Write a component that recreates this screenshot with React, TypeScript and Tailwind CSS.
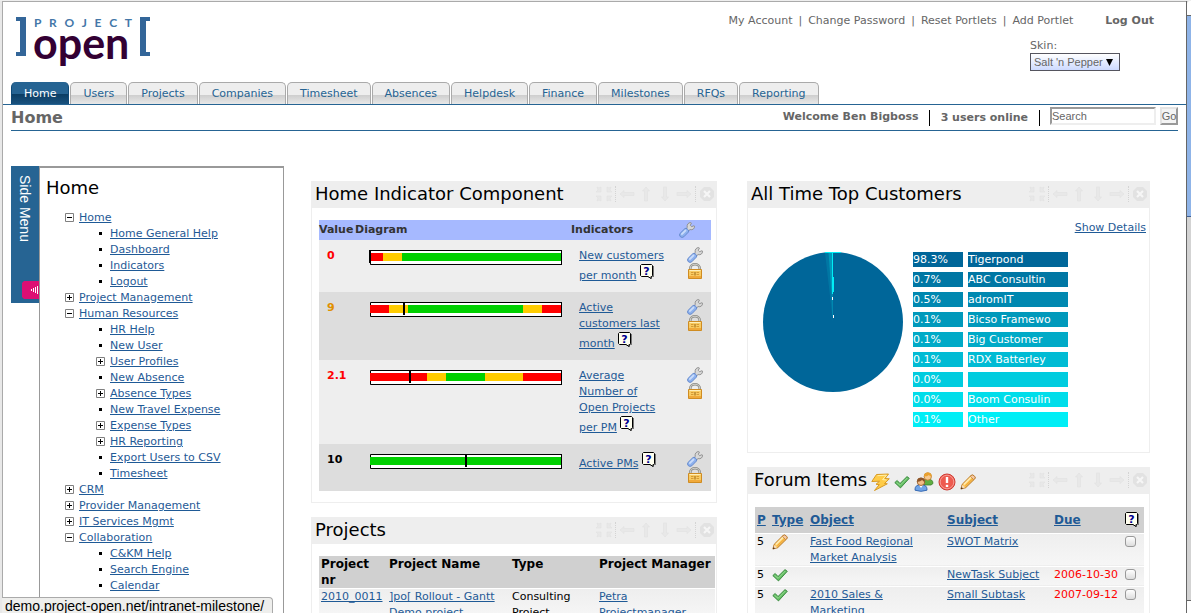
import React from 'react';

interface MenuItem {
  label: string;
  open?: boolean;
  closed?: boolean;
  children?: MenuItem[];
}

interface Indicator {
  value: string;
  valueClass: string;
  name: string;
  marker: number;
  bands: [string, number][];
}

const R = '#ff0000';
const Y = '#ffcc00';
const G = '#00d000';

const tabs = [
  'Users',
  'Projects',
  'Companies',
  'Timesheet',
  'Absences',
  'Helpdesk',
  'Finance',
  'Milestones',
  'RFQs',
  'Reporting',
];

const menu: MenuItem[] = [
  {
    label: 'Home',
    open: true,
    children: [{ label: 'Home General Help' }, { label: 'Dashboard' }, { label: 'Indicators' }, { label: 'Logout' }],
  },
  { label: 'Project Management', closed: true },
  {
    label: 'Human Resources',
    open: true,
    children: [
      { label: 'HR Help' },
      { label: 'New User' },
      { label: 'User Profiles', closed: true },
      { label: 'New Absence' },
      { label: 'Absence Types', closed: true },
      { label: 'New Travel Expense' },
      { label: 'Expense Types', closed: true },
      { label: 'HR Reporting', closed: true },
      { label: 'Export Users to CSV' },
      { label: 'Timesheet' },
    ],
  },
  { label: 'CRM', closed: true },
  { label: 'Provider Management', closed: true },
  { label: 'IT Services Mgmt', closed: true },
  {
    label: 'Collaboration',
    open: true,
    children: [{ label: 'C&KM Help' }, { label: 'Search Engine' }, { label: 'Calendar' }],
  },
];

const indicators: Indicator[] = [
  { value: '0', valueClass: 'text-[#ff0000]', name: 'New customers per month', marker: 0, bands: [[R, 13], [Y, 19], [G, 160]] },
  { value: '9', valueClass: 'text-[#e09000]', name: 'Active customers last month', marker: 34, bands: [[R, 19], [Y, 19], [G, 115], [Y, 19], [R, 20]] },
  { value: '2.1', valueClass: 'text-[#ff0000]', name: 'Average Number of Open Projects per PM', marker: 40, bands: [[R, 57], [Y, 19], [G, 39], [Y, 38], [R, 39]] },
  { value: '10', valueClass: 'text-black', name: 'Active PMs', marker: 96, bands: [[G, 192]] },
];

const customers = [
  { share: '98.3%', name: 'Tigerpond', color: 'bg-[#006699]' },
  { share: '0.7%', name: 'ABC Consultin', color: 'bg-[#0077a4]' },
  { share: '0.5%', name: 'adromIT', color: 'bg-[#0088b0]' },
  { share: '0.1%', name: 'Bicso Framewo', color: 'bg-[#0099bb]' },
  { share: '0.1%', name: 'Big Customer', color: 'bg-[#00aac7]' },
  { share: '0.1%', name: 'RDX Batterley', color: 'bg-[#00bbd4]' },
  { share: '0.0%', name: '', color: 'bg-[#00ccdf]' },
  { share: '0.0%', name: 'Boom Consulin', color: 'bg-[#00ddea]' },
  { share: '0.1%', name: 'Other', color: 'bg-[#00eef6]' },
];

const forumItems = [
  { type: 'pencil', object: 'Fast Food Regional\nMarket Analysis', subject: 'SWOT Matrix', due: '' },
  { type: 'check', object: '', subject: 'NewTask Subject', due: '2006-10-30' },
  { type: 'check', object: '2010 Sales &\nMarketing', subject: 'Small Subtask', due: '2007-09-12' },
];

const Link: React.FC<{ children: React.ReactNode }> = ({ children }) => (
  <a href="#" className="text-[#1f5a96] underline">
    {children}
  </a>
);

/* Icons */

const HelpIcon = () => (
  <svg width="14" height="15" viewBox="0 0 14 15" className="inline-block shrink-0 align-baseline" role="img" aria-label="Help">
    <path d="M2 2h12v11h-2v2l-4-2H2z" fill="#777" />
    <path d="M1.500.500h10l1 1v10l-1 1h-.500v2l-3-2h-6.500l-1-1v-10z" fill="#fffff0" stroke="#000" />
    <text x="6.500" y="10.500" textAnchor="middle" fontFamily="DejaVu Sans" fontWeight="bold" fontSize="11" fill="#000090">
      ?
    </text>
  </svg>
);

const WrenchIcon = () => (
  <svg width="16" height="16" viewBox="0 0 16 16" aria-hidden="true">
    <path
      d="M7.200 7 8.200 5.300C7.700 2.500 9.300.700 11.600.500L12.400 1 11.300 3.300 12.600 4.700 15 3.700 15.600 4.200C15.600 6.800 13.600 8.200 11.100 7.600L9.300 9z"
      fill="#d8d8d8"
      stroke="#8a8a8a"
      strokeWidth=".9"
    />
    <path d="M1.100 11.300 5.800 6.700Q7 5.700 8.200 6.800L9.300 7.900Q10.200 9 9.300 10.200L4.800 14.800Q3 16.100 1.300 14.700-.200 13 1.100 11.300z" fill="#8db1ee" stroke="#6186ca" strokeWidth=".9" />
    <path d="M2.300 12.700 7 8" stroke="#c9dcfb" strokeWidth="1.800" />
  </svg>
);

const LockIcon = () => (
  <svg width="16" height="16" viewBox="0 0 16 16" aria-hidden="true">
    <path d="M3.300 7.500V5.200a4.700 3.900 0 0 1 9.400 0v2.300" fill="none" stroke="#8b8b86" strokeWidth="2.600" />
    <path d="M3.300 7.500V5.200a4.700 3.900 0 0 1 9.400 0v2.300" fill="none" stroke="#cfcfca" strokeWidth="1.100" />
    <path d="M1.500 6.500h13v9h-13z" fill="#f8cb62" stroke="#cf8c22" />
    <path d="M2 13h12v2H2z" fill="#f0a93a" />
    <path d="M2.500 7.500h11" stroke="#fdeebb" />
    <path d="M4 9.500h2.500M4 11.500h2.500M9.500 9.500H12M9.500 11.500H12" stroke="#d79a33" />
    <path d="M7.500 9h1v3.500h-1z" fill="#9a640f" />
  </svg>
);

const CheckIcon = () => (
  <svg width="16" height="16" viewBox="0 0 16 16" aria-hidden="true">
    <path d="M.800 8.600 3.200 6.500 6 9.500 13 2.600 15.300 4.300 6.500 13.900z" fill="#63bd62" stroke="#34843a" strokeWidth=".9" strokeLinejoin="round" />
    <path d="M2.500 8.300 6.100 11.300 13.300 4" fill="none" stroke="#9bdc96" strokeWidth=".9" />
  </svg>
);

const PencilIcon = () => (
  <svg width="16" height="16" viewBox="0 0 16 16" aria-hidden="true">
    <path d="M.900 15 2.200 10.300 11 1.500Q12.400.400 14 1.700L14.500 2.300Q15.800 3.700 14.600 5L5.700 13.700z" fill="#ffc95d" stroke="#b06b17" strokeWidth=".9" />
    <path d="M3.800 10.500 11.600 2.800" stroke="#ffeeb8" strokeWidth="1.400" />
    <path d="M5.300 12 13 4.500" stroke="#e99c2d" />
    <path d="M1.300 14.700 2.300 11 5 13.500z" fill="#f4ddc0" />
    <path d="M.900 15.200 1.500 13l1.500 1.500z" fill="#4a2b12" />
    <path d="M11 1.600Q12.400.400 14 1.700L14.500 2.300Q15.800 3.700 14.600 5L13.600 5.600 10.400 2.500z" fill="#f3c7a4" stroke="#b06b17" strokeWidth=".6" />
  </svg>
);

const BoltIcon = () => (
  <svg width="19" height="20" viewBox="0 0 19 20" aria-hidden="true">
    <path d="M5.500 2.500 17.500 2 14 6.500 18.300 6.800 13.500 11.500 16.300 11.800 3.500 18.500 8.300 12.600 5 12.300 8.500 9.200.800 9.500z" fill="#ffcc48" stroke="#d89a23" strokeLinejoin="round" />
    <path d="M6.500 3.700 15.500 3.200 11.500 7.600 15.500 8" fill="none" stroke="#fff0a8" />
  </svg>
);

const UsersIcon = () => (
  <svg width="20" height="20" viewBox="0 0 20 20" aria-hidden="true">
    <path d="M9 11.500Q8.500 7 13.700 7T19 11.500L17 13H10z" fill="#5fae42" stroke="#397b27" strokeWidth=".8" />
    <circle cx="13.800" cy="4.500" r="3.700" fill="#f7c98f" stroke="#b87524" strokeWidth=".8" />
    <path d="M10 4.500Q9.900.600 13.800.600T17.600 4.800Q15.800 4.200 15 2.900 13 4.400 10 4.500z" fill="#eaa12e" />
    <path d="M1 18.200Q.500 12.700 7 12.700T13 18.200Q7 20.500 1 18.200z" fill="#6fa4e8" stroke="#2f62ae" strokeWidth=".9" />
    <path d="M5 13 7 16 9 13z" fill="#fff" />
    <circle cx="7" cy="9.700" r="3.800" fill="#f3bd86" stroke="#8c5220" strokeWidth=".8" />
    <path d="M3.100 9.900Q3 5.700 7 5.700T10.900 10Q9 9.300 8.200 8 6.500 9.600 3.100 9.900z" fill="#8d5428" />
  </svg>
);

const AlertIcon = () => (
  <svg width="18" height="18" viewBox="0 0 18 18" aria-hidden="true">
    <circle cx="9" cy="9" r="8" fill="#ee5b50" stroke="#cf3c34" />
    <circle cx="9" cy="9" r="6.800" fill="none" stroke="#f7a49c" strokeWidth=".9" />
    <path d="M9 4v6" stroke="#fff" strokeWidth="2.400" />
    <path d="M9 11.800v2.200" stroke="#fff" strokeWidth="2.400" />
  </svg>
);

const ToolIcon: React.FC<{ label: string; d: string }> = ({ label, d }) => (
  <button type="button" aria-label={label} className="block size-4">
    <svg width="16" height="16" viewBox="0 0 16 16" aria-hidden="true">
      <path d={d} fill="#e8e8e8" stroke="#e1e1e1" strokeWidth=".6" />
    </svg>
  </button>
);

const PortletTools = () => (
  <div className="flex shrink-0 items-center gap-[3px]">
    <ToolIcon
      label="Minimize"
      d="M1 1l2 1 2-1v5l-5 0 2-2zM15 1l-2 1-2-1v5h5l-2-2zM1 15l2-1 2 1v-5H0l2 2zM15 15l-2-1-2 1v-5h5l-2 2z"
    />
    <span className="h-4 border-l border-dotted border-[#d4d4d4]" />
    <ToolIcon label="Move left" d="M1 8l4-3.500v2h10v3H5v2z" />
    <ToolIcon label="Move up" d="M8 1l3.500 4h-2v10h-3V5h-2z" />
    <ToolIcon label="Move down" d="M8 15l3.500-4h-2V1h-3v10h-2z" />
    <ToolIcon label="Move right" d="M15 8l-4-3.500v2H1v3h10v2z" />
    <span className="h-4 border-l border-dotted border-[#d4d4d4]" />
    <button type="button" aria-label="Close" className="block size-4">
      <svg width="16" height="16" viewBox="0 0 16 16" aria-hidden="true">
        <path d="M5 1h6l4 4v6l-4 4H5l-4-4V5z" fill="#e2e2e2" />
        <path d="M5 5l6 6M11 5l-6 6" stroke="#f6f6f6" strokeWidth="2.200" />
      </svg>
    </button>
  </div>
);

const Portlet: React.FC<{ title: string; icons?: React.ReactNode; children: React.ReactNode }> = ({ title, icons, children }) => (
  <section className="border border-[#eeeeee] bg-white">
    <div className="flex h-[26px] items-center justify-between bg-[#eeeeee] pr-px pb-[3px] pl-[3px]">
      <div className={icons ? 'flex items-center gap-1 pl-[3px]' : 'flex items-center'}>
        <h2 className="text-[18px] leading-[24px] whitespace-nowrap">{title}</h2>
        {icons}
      </div>
      <PortletTools />
    </div>
    {children}
  </section>
);

/* Page parts */

const Logo = () => (
  <a href="#" aria-label="Project Open" className="flex h-[54px] w-[134px] items-start justify-between">
    <svg width="10" height="39" viewBox="0 0 10 39" aria-hidden="true">
      <path d="M0 0h10v39H0v-4h4V4H0z" fill="#336699" />
    </svg>
    <span className="flex w-[98px] flex-col">
      <span className="flex justify-between font-['Lato'] text-[12px] leading-[11px] font-bold text-[#4477a8]">
        {['P', 'R', 'O', 'J', 'E', 'C', 'T'].map((letter) => (
          <span key={letter}>{letter}</span>
        ))}
      </span>
      <span className="-ml-px font-['Lato'] text-[43px] leading-[30px] font-bold text-[#330033]">open</span>
    </span>
    <svg width="10" height="39" viewBox="0 0 10 39" aria-hidden="true">
      <path d="M10 0H0v39h10v-4H6V4h4z" fill="#336699" />
    </svg>
  </a>
);

const TopBar = () => (
  <header className="flex h-20 justify-between pt-3 pr-8 pl-[13px]">
    <div className="pt-[3px]">
      <Logo />
    </div>
    <div className="flex flex-col items-end text-[#666666]">
      <nav className="flex items-center leading-[14px]">
        <a href="#">My Account</a>
        <span className="px-[6px]">|</span>
        <a href="#">Change Password</a>
        <span className="px-[6px]">|</span>
        <a href="#">Reset Portlets</a>
        <span className="px-[6px]">|</span>
        <a href="#">Add Portlet</a>
        <a href="#" className="ml-8 font-bold">
          Log Out
        </a>
      </nav>
      <div className="mt-[11px] mr-[34px] flex w-[90px] flex-col">
        <label htmlFor="skin" className="leading-[14px]">
          Skin:
        </label>
        <div className="flex items-center border border-[#55555f] bg-linear-to-b from-white to-[#cddaff]">
          <select id="skin" className="h-4 w-full appearance-none pl-[3px] font-['Liberation_Sans',sans-serif] text-[11px]">
            <option>Salt 'n Pepper</option>
          </select>
          <svg width="7" height="7" viewBox="0 0 7 7" className="mr-[6px] shrink-0" aria-hidden="true">
            <path d="M0 0h7L3.500 7z" fill="#000" />
          </svg>
        </div>
      </div>
    </div>
  </header>
);

const MainTabs = () => (
  <nav className="flex gap-px border-b border-[#266493] pl-2">
    <a
      href="#"
      className="h-[22px] rounded-t-[5px] border-x border-[#0f4a78] bg-[linear-gradient(#266493_55%,#0b3d63_55%,#1a527f)] px-3 leading-[23px] text-white"
    >
      Home
    </a>
    {tabs.map((tab) => (
      <a
        key={tab}
        href="#"
        className="h-[22px] rounded-t-[5px] border border-b-0 border-[#aaaaaa] bg-[linear-gradient(#eeeeee_55%,#cccccc_55%,#e8e8e8)] px-3 leading-[22px] text-[#266493]"
      >
        {tab}
      </a>
    ))}
  </nav>
);

const SubBar = () => (
  <div className="mr-2 ml-2 flex h-[26px] items-center border-b border-[#266493] font-bold text-[#666666]">
    <h1 className="flex-1 text-[16px]">Home</h1>
    <span className="pr-[10px]">Welcome Ben Bigboss</span>
    <span className="border-x border-black px-[11px] leading-4">3 users online</span>
    <form className="flex items-center gap-1 pb-1 pl-[10px] font-['Liberation_Sans',sans-serif] text-[11px] font-normal">
      <input
        type="text"
        aria-label="Search"
        defaultValue="Search"
        className="h-[18px] w-[106px] border-2 border-t-[#999999] border-r-[#eeeeee] border-b-[#eeeeee] border-l-[#999999]"
      />
      <button
        type="submit"
        className="flex h-[18px] w-[18px] justify-center border-2 border-t-[#e4e4e4] border-r-[#999999] border-b-[#999999] border-l-[#e4e4e4] bg-[#f4f4f4] leading-[14px]"
      >
        Go
      </button>
    </form>
  </div>
);

const Toggle: React.FC<{ open?: boolean }> = ({ open }) => (
  <button type="button" aria-label={open ? 'Collapse' : 'Expand'} className="block size-[9px]">
    <svg width="9" height="9" viewBox="0 0 9 9" aria-hidden="true">
      <path d="M.500.500h8v8h-8z" fill="#fff" stroke="#808080" />
      <path d={open ? 'M2 4.500h5' : 'M2 4.500h5M4.500 2v5'} stroke="#000" />
    </svg>
  </button>
);

const MenuTree: React.FC<{ items: MenuItem[]; nested?: boolean }> = ({ items, nested }) => (
  <ul className={nested ? 'pl-[31px]' : 'pl-[19px]'}>
    {items.map((item) => (
      <li key={item.label}>
        <div className="flex h-4 items-center leading-4">
          <span className="flex w-[14px] items-center pb-[2px]">
            {item.open || item.closed ? <Toggle open={item.open} /> : <span className="ml-[3px] size-[3px] bg-black" />}
          </span>
          <Link>{item.label}</Link>
        </div>
        {item.children && <MenuTree items={item.children} nested />}
      </li>
    ))}
  </ul>
);

const SideMenu = () => (
  <aside className="flex w-[273px] shrink-0 items-start self-stretch">
    <button type="button" className="flex h-[137px] w-7 flex-col justify-between bg-[#266493] pt-[9px] pb-1 text-white">
      <span className="self-center font-['Liberation_Sans',sans-serif] text-[14px] leading-4 [writing-mode:vertical-rl]">Side Menu</span>
      <svg width="17" height="18" viewBox="0 0 17 18" className="self-end" aria-hidden="true">
        <path d="M2 0h15v18H2L0 16V2z" fill="#dd0f74" />
        <path d="M9.500 8v2M11.500 7v4M13.500 6v6M15.500 5v8" stroke="#fff" />
      </svg>
    </button>
    <div className="flex-1 self-stretch border-x border-t-2 border-[#999999] pl-[6px]">
      <h2 className="mt-2 mb-[10px] text-[18px] leading-6">Home</h2>
      <MenuTree items={menu} />
    </div>
  </aside>
);

const Diagram: React.FC<{ bands: [string, number][]; marker: number }> = ({ bands, marker }) => (
  <svg width="194" height="15" viewBox="-1 0 194 15" className="block" aria-hidden="true">
    <path d="M.500.500h191v14H.500z" fill="#fff" stroke="#000" />
    {bands.map(([color, width], i) => {
      const x = bands.slice(0, i).reduce((sum, band) => sum + band[1], 0);
      return <rect key={i} x={x} y="3" width={width} height="8" fill={color} />;
    })}
    <path d="M191.500 0v15" stroke="#000" />
    <rect x={marker - 1} y="0" width="2" height="13" fill="#000" />
  </svg>
);

const IndicatorPortlet = () => (
  <Portlet title="Home Indicator Component">
    <div className="pt-3 pr-[5px] pb-[11px] pl-[7px]">
      <table className="w-full table-fixed text-left">
        <thead>
          <tr className="h-5 bg-[#a6b9ff] text-[#333333]">
            <th className="w-9">Value</th>
            <th>Diagram</th>
            <th className="w-[108px]">Indicators</th>
            <th className="w-8" aria-label="Settings">
              <WrenchIcon />
            </th>
          </tr>
        </thead>
        <tbody>
          {indicators.map((item) => (
            <tr key={item.name} className="bg-[#eeeeee] align-top even:bg-[#dddddd]">
              <td className={`pt-2 pl-2 leading-4 font-bold ${item.valueClass}`}>{item.value}</td>
              <td className="pt-[10px] pl-[14px]">
                <Diagram bands={item.bands} marker={item.marker} />
              </td>
              <td className="pt-2 pr-3 pb-2 pl-2 leading-4">
                <Link>{item.name}</Link> <HelpIcon />
              </td>
              <td className="px-2 pt-[7px] pb-2">
                <a href="#" aria-label="Edit" className="block">
                  <WrenchIcon />
                </a>
                <a href="#" aria-label="Permissions" className="block">
                  <LockIcon />
                </a>
              </td>
            </tr>
          ))}
        </tbody>
      </table>
    </div>
  </Portlet>
);

const ProjectsPortlet = () => (
  <Portlet title="Projects">
    <div className="pt-3 pr-px pl-[7px]">
      <table className="w-full table-fixed text-left">
        <thead>
          <tr className="border-b border-white bg-[#d0d0d0] align-top text-[12px] leading-4">
            <th className="w-[68px] px-[2px]">Project nr</th>
            <th className="w-[123px] px-[2px]">Project Name</th>
            <th className="w-[87px] px-[2px]">Type</th>
            <th className="px-[2px] whitespace-nowrap">Project Manager</th>
          </tr>
        </thead>
        <tbody>
          <tr className="bg-linear-to-b from-[#eeeeee] to-[#f8f8f8] align-top leading-4">
            <td className="px-[2px]">
              <Link>2010_0011</Link>
            </td>
            <td className="px-[2px]">
              <Link>
                ]po[ Rollout - Gantt
                <br />
                Demo project
              </Link>
            </td>
            <td className="px-[2px]">
              Consulting
              <br />
              Project
            </td>
            <td className="px-[2px]">
              <Link>
                Petra
                <br />
                Projectmanager
              </Link>
            </td>
          </tr>
        </tbody>
      </table>
    </div>
  </Portlet>
);

const CustomersPie = () => (
  <svg width="140" height="140" viewBox="0 0 140 140" className="shrink-0" role="img" aria-label="Customer share">
    <circle cx="70" cy="70" r="70" fill="#006699" />
    <path d="M70 70 62 .500h5z" fill="#0077a4" />
    <path d="M70 62 65.500 0H69z" fill="#0099bb" />
    <path d="M62 .500h16" stroke="#00eef6" />
    <path d="M69.500 0v42M70.500 25v15" stroke="#00eef6" />
    <path d="M69.500 42v22" stroke="#0088b0" />
    <path d="M69.500 45v3M70.500 63v3" stroke="#fff" />
  </svg>
);

const CustomersPortlet = () => (
  <Portlet title="All Time Top Customers">
    <div className="pt-3 pr-[3px] pb-[25px] pl-[15px]">
      <div className="text-right leading-4">
        <Link>Show Details</Link>
      </div>
      <div className="mt-4 flex items-start gap-[10px]">
        <CustomersPie />
        <ul className="flex flex-col gap-[5px] leading-[15px] text-white">
          {customers.map((row, i) => (
            <li key={i} className="flex gap-[5px]">
              <span className={`h-[15px] w-[50px] ${row.color}`}>{row.share}</span>
              <span className={`h-[15px] w-[100px] whitespace-nowrap ${row.color}`}>{row.name}</span>
            </li>
          ))}
        </ul>
      </div>
    </div>
  </Portlet>
);

const ForumPortlet = () => (
  <Portlet
    title="Forum Items"
    icons={
      <span className="flex items-center gap-1 pt-1">
        <BoltIcon />
        <CheckIcon />
        <UsersIcon />
        <AlertIcon />
        <PencilIcon />
      </span>
    }
  >
    <div className="pt-[13px] pr-[5px] pl-[7px]">
      <table className="w-full table-fixed text-left">
        <thead>
          <tr className="h-[26px] border-b border-white bg-[#d0d0d0] text-[12px]">
            <th className="w-[15px] px-[2px]"><Link>P</Link></th>
            <th className="w-[38px] px-[2px]"><Link>Type</Link></th>
            <th className="px-[2px]"><Link>Object</Link></th>
            <th className="w-[107px] px-[2px]"><Link>Subject</Link></th>
            <th className="w-[71px] px-[2px]"><Link>Due</Link></th>
            <th className="w-[21px]">
              <span className="flex pl-[2px]">
                <HelpIcon />
              </span>
            </th>
          </tr>
        </thead>
        <tbody>
          {forumItems.map((item) => (
            <tr key={item.subject} className="border-b border-white bg-linear-to-b from-[#eeeeee] to-[#f6f6f6] align-top leading-4">
              <td className="px-[2px]">5</td>
              <td className="px-[2px] pb-[3px]">{item.type === 'pencil' ? <PencilIcon /> : <CheckIcon />}</td>
              <td className="px-[2px] whitespace-pre-line">{item.object && <Link>{item.object}</Link>}</td>
              <td className="px-[2px] whitespace-nowrap">
                <Link>{item.subject}</Link>
              </td>
              <td className="px-[2px] whitespace-nowrap text-[#ff0000]">{item.due}</td>
              <td className="px-[2px] pt-[2px]">
                <input
                  type="checkbox"
                  aria-label={`Select ${item.subject}`}
                  className="block size-[11px] appearance-none rounded-[3px] border border-[#999999] bg-linear-to-b from-white to-[#dddddd]"
                />
              </td>
            </tr>
          ))}
        </tbody>
      </table>
    </div>
  </Portlet>
);

const Scrollbar = () => (
  <div className="flex w-[5px] shrink-0 flex-col border-l border-[#666666] bg-[#d3d3d3]" aria-hidden="true">
    <span className="h-[15px] rounded-tl-[3px] border-b border-[#666666] bg-white" />
    <span className="h-[201px] border-b border-[#3d5f94] bg-[#8fb4e8]" />
    <span className="flex-1" />
    <span className="h-[13px] border-t border-[#666666] bg-white" />
  </div>
);

export default function App() {
  return (
    <div className="relative flex h-screen overflow-hidden border-t border-[#eeeeee] bg-[#e8e8e8] pl-[2px] font-['DejaVu_Sans',Verdana,sans-serif] text-[11px] text-black">
      <div className="min-w-0 flex-1 border-t border-l border-[#aaaaaa] bg-white">
        <TopBar />
        <MainTabs />
        <SubBar />
        <main className="flex items-start pt-[35px] pr-9 pl-2">
          <SideMenu />
          <div className="ml-[27px] grid min-w-0 flex-1 grid-cols-[406fr_403fr] items-start gap-[30px] pt-[15px]">
            <div className="flex min-w-0 flex-col gap-[14px]">
              <IndicatorPortlet />
              <ProjectsPortlet />
            </div>
            <div className="flex min-w-0 flex-col gap-[14px]">
              <CustomersPortlet />
              <ForumPortlet />
            </div>
          </div>
        </main>
      </div>
      <Scrollbar />
      <div className="absolute bottom-0 left-[2px] h-4 rounded-tr-[4px] border-t border-r border-[#aaaaaa] bg-[#eeeeec] pr-2 pl-[3px] font-['Liberation_Sans',sans-serif] text-[14px] leading-4">
        demo.project-open.net/intranet-milestone/
      </div>
    </div>
  );
}
